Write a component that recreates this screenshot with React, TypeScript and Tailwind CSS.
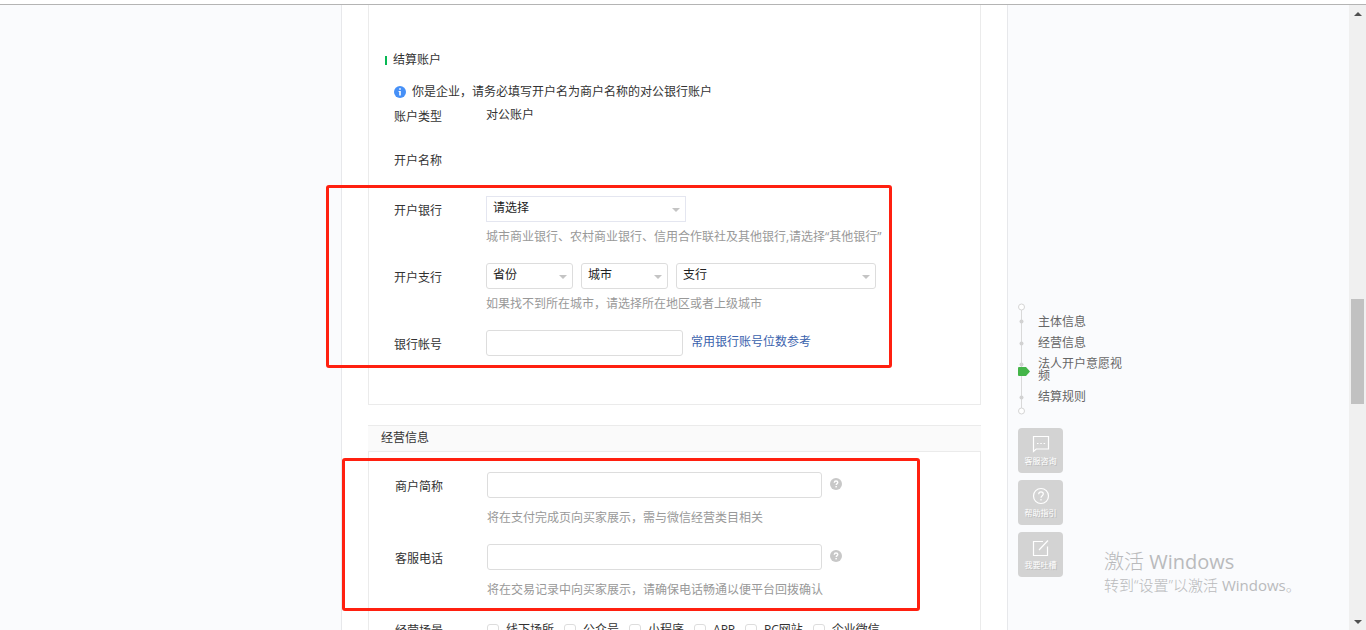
import { useState } from 'react';
import type { ReactNode } from 'react';

const NAV_ITEMS = ['主体信息', '经营信息', '法人开户意愿视频', '结算规则'];
const SCENES = ['线下场所', '公众号', '小程序', 'APP', 'PC网站', '企业微信'];

function Row({ label, htmlFor, children }: { label: string; htmlFor?: string; children?: ReactNode }) {
  return (
    <div className="flex items-start">
      <label htmlFor={htmlFor} className="w-[93px] shrink-0 pl-px leading-[30px]">{label}</label>
      <div className="flex min-w-0 flex-1">{children}</div>
    </div>
  );
}

function Hint({ className, children }: { className: string; children: ReactNode }) {
  return <p className={`ml-[93px] whitespace-nowrap leading-5 text-[#999] ${className}`}>{children}</p>;
}

function Select({ id, label, text, className }: { id: string; label?: string; text: string; className: string }) {
  return (
    <div className={`relative h-[26px] ${className}`}>
      <select
        id={id}
        aria-label={label}
        className="block h-full w-full appearance-none rounded-[inherit] border border-inherit bg-white px-1.5 pb-0.5 text-xs text-[#222] outline-none"
      >
        <option>{text}</option>
      </select>
      <svg viewBox="0 0 8 4" className="pointer-events-none absolute right-1.5 top-3 h-1 w-2" fill="#c4c4c4">
        <path d="M0 0h8L4 4z" />
      </svg>
    </div>
  );
}

function HelpIcon() {
  return (
    <button type="button" aria-label="帮助" className="ml-2 mt-1.5 h-3 w-3">
      <svg viewBox="0 0 12 12" className="h-3 w-3">
        <circle cx="6" cy="6" r="6" fill="#c8c8c8" />
        <path d="M4.3 4.7C4.3 3.6 5 3 6 3s1.8.6 1.8 1.5C7.8 5.600 6.200 5.600 6.200 7" fill="none" stroke="#fff" strokeWidth="1.400" />
        <rect x="5.400" y="8" width="1.500" height="1.400" fill="#fff" />
      </svg>
    </button>
  );
}

// red highlight frame drawn over a group of fields
function Frame({ className }: { className: string }) {
  return <div className={`pointer-events-none absolute rounded-[3px] border-[3px] border-[#ff2010] ${className}`} />;
}

function SideNav() {
  return (
    <nav className="flex">
      <svg viewBox="0 0 12 112" className="h-28 w-3 shrink-0">
        <path d="M3.500 7v98" stroke="#d9d9d9" />
        <circle cx="3.500" cy="4" r="3" fill="#fff" stroke="#d5d5d5" />
        <circle cx="3.500" cy="108" r="3" fill="#fff" stroke="#d5d5d5" />
        <g fill="#d2d2d2">
          <circle cx="3.500" cy="18.500" r="2" />
          <circle cx="3.500" cy="40.500" r="2" />
          <circle cx="3.500" cy="61.500" r="2" />
          <circle cx="3.500" cy="94.500" r="2" />
        </g>
        <path d="M1 64h7l4 4.500-4 4.500H1a1 1 0 0 1-1-1v-7a1 1 0 0 1 1-1z" fill="#44b549" />
      </svg>
      <ul className="ml-2 flex w-[88px] flex-col gap-[9px] pt-[13px] leading-3 text-[#666]">
        {NAV_ITEMS.map(item => (
          <li key={item}><a href="#">{item}</a></li>
        ))}
      </ul>
    </nav>
  );
}

function ToolButton({ label, children }: { label: string; children: ReactNode }) {
  return (
    <button type="button" className="flex h-[45px] w-[45px] flex-col items-center rounded-sm bg-[#d3d3d3] pt-[7px] text-white">
      <svg viewBox="0 0 18 18" className="h-[18px] w-[18px]" fill="none" stroke="#fff" strokeWidth="1.200">
        {children}
      </svg>
      <span className="mt-0.5 whitespace-nowrap text-[8px] leading-3 [text-shadow:1px_1px_0_#bbb]">{label}</span>
    </button>
  );
}

function Scrollbar() {
  return (
    <div className="flex w-[17px] shrink-0 flex-col items-center bg-[#f0f0f0]">
      <div className="flex h-[17px] items-center">
        <svg viewBox="0 0 8 4" className="h-1 w-2" fill="#505050"><path d="M0 4h8L4 0z" /></svg>
      </div>
      <div className="flex w-[13px] flex-1 flex-col">
        <div className="grow-[277]" />
        <div className="h-[105px] bg-[#c1c1c1]" />
        <div className="grow-[209]" />
      </div>
      <div className="flex h-[17px] items-center">
        <svg viewBox="0 0 8 4" className="h-1 w-2" fill="#505050"><path d="M0 0h8L4 4z" /></svg>
      </div>
    </div>
  );
}

export default function App() {
  const [account, setAccount] = useState('');
  const [shortName, setShortName] = useState('');
  const [phone, setPhone] = useState('');
  const [scenes, setScenes] = useState<string[]>([]);

  const toggleScene = (s: string) => {
    setScenes(scenes.includes(s) ? scenes.filter(x => x !== s) : [...scenes, s]);
  };

  const inputClass = 'h-[26px] rounded-[3px] border border-[#ddd] bg-white px-1.5 outline-none';

  return (
    <div className="relative flex h-screen flex-col overflow-hidden bg-[#fafbfd] font-['Open_Sans','Noto_Sans_CJK_SC',sans-serif] text-xs text-[#333]">
      <div className="h-[5px] shrink-0 border-b border-[#b4b4b4] bg-white" />

      <div className="flex min-h-0 flex-1">
        <div className="flex-1" />

        <main className="w-[667px] shrink-0 border-x border-[#e7e8eb] bg-white px-[26px]">
          <section className="border border-t-0 border-[#ebebeb] px-6 pb-11 pt-11">
            <h3 className="-ml-2 flex items-center leading-[22px]">
              <span className="mr-1.5 h-[9px] w-0.5 bg-[#07b853]" />
              结算账户
            </h3>
            <p className="mt-2.5 flex h-[21px] items-center pl-px">
              <svg viewBox="0 0 12 12" className="mr-1.5 h-3 w-3">
                <circle cx="6" cy="6" r="6" fill="#4690f7" />
                <path d="M5.200 2.300h1.600v1.500H5.200zM4.600 5h2.200v4.500H5.200V6h-.6z" fill="#fff" />
              </svg>
              你是企业，请务必填写开户名为商户名称的对公银行账户
            </p>
            <Row label="账户类型"><span className="leading-[26px]">对公账户</span></Row>
            <div className="mt-3.5"><Row label="开户名称" /></div>

            <div className="relative mt-5">
              <Row label="开户银行" htmlFor="bank">
                <Select id="bank" text="请选择" className="w-[200px] border-[#e4e6f0]" />
              </Row>
              <Hint className="mt-px">城市商业银行、农村商业银行、信用合作联社及其他银行,请选择“其他银行”</Hint>
              <div className="mt-4">
                <Row label="开户支行" htmlFor="province">
                  <div className="flex gap-2">
                    <Select id="province" text="省份" className="w-[87px] rounded-[3px] border-[#ddd]" />
                    <Select id="city" label="城市" text="城市" className="w-[87px] rounded-[3px] border-[#ddd]" />
                    <Select id="branch" label="支行" text="支行" className="w-[200px] rounded-[3px] border-[#ddd]" />
                  </div>
                </Row>
              </div>
              <Hint className="mt-px">如果找不到所在城市，请选择所在地区或者上级城市</Hint>
              <div className="mt-4">
                <Row label="银行帐号" htmlFor="account">
                  <input id="account" value={account} onChange={e => setAccount(e.target.value)} className={`w-[197px] ${inputClass}`} />
                  <a href="#" className="ml-2 leading-6 text-[#3a62ad]">常用银行账号位数参考</a>
                </Row>
              </div>
              <Frame className="-bottom-2 -left-[67px] -top-[11px] w-[566px]" />
            </div>
          </section>

          <h2 className="mt-5 h-[27px] border-y border-[#ebebeb] bg-[#fafafa] pl-[13px] leading-6">经营信息</h2>
          <section className="border-x border-[#ebebeb] pb-10 pl-[25px] pt-5">
            <div className="relative">
              <Row label="商户简称" htmlFor="short-name">
                <input id="short-name" value={shortName} onChange={e => setShortName(e.target.value)} className={`w-[335px] ${inputClass}`} />
                <HelpIcon />
              </Row>
              <Hint className="mt-1.5">将在支付完成页向买家展示，需与微信经营类目相关</Hint>
              <div className="mt-4">
                <Row label="客服电话" htmlFor="phone">
                  <input id="phone" value={phone} onChange={e => setPhone(e.target.value)} className={`w-[335px] ${inputClass}`} />
                  <HelpIcon />
                </Row>
              </div>
              <Hint className="mt-1.5">将在交易记录中向买家展示，请确保电话畅通以便平台回拨确认</Hint>
              <Frame className="-bottom-[11px] -left-[52px] -top-3.5 w-[578px]" />
            </div>
            <fieldset className="mt-4 flex">
              <legend className="float-left w-[93px] pl-px leading-[30px]">经营场景</legend>
              <div className="flex gap-2.5 whitespace-nowrap">
                {SCENES.map(s => (
                  <label key={s} className="flex h-7 items-center leading-[26px]">
                    <input
                      type="checkbox"
                      checked={scenes.includes(s)}
                      onChange={() => toggleScene(s)}
                      className="mr-[7px] h-3 w-3 appearance-none rounded-[3px] border border-[#ddd] bg-white checked:bg-[#07b853]"
                    />
                    {s}
                  </label>
                ))}
              </div>
            </fieldset>
          </section>
        </main>

        <aside className="flex-1">
          <div className="pl-2.5 pt-[298px]">
            <SideNav />
            <div className="mt-[13px] flex flex-col gap-[7px]">
              <ToolButton label="客服咨询">
                <path d="M1.500 16.500v-15h15v12.500H4.200z" />
                <path d="M5 8.500h1.500M8.300 8.500h1.500M11.600 8.500h1.500" />
              </ToolButton>
              <ToolButton label="帮助指引">
                <circle cx="9" cy="9" r="7.500" />
                <path d="M6.700 7.200C6.700 5.700 7.700 4.900 9 4.900s2.300.8 2.300 2.100C11.300 8.700 9 8.700 9 10.700M9 12v1.500" />
              </ToolButton>
              <ToolButton label="我要吐槽">
                <path d="M11 2.500H1.500v14h14V7.500M7 11l9-9.500" />
              </ToolButton>
            </div>
          </div>
        </aside>

        <Scrollbar />
      </div>

      {/* system watermark */}
      <div className="pointer-events-none absolute bottom-[33px] right-[62px] w-[200px] whitespace-nowrap font-light text-[#b9babc]">
        <p className="text-xl leading-[22px]">激活 <span className="font-normal">Windows</span></p>
        <p className="text-[15px] leading-6">转到“设置”以激活 <span className="font-normal">Windows</span>。</p>
      </div>
    </div>
  );
}
